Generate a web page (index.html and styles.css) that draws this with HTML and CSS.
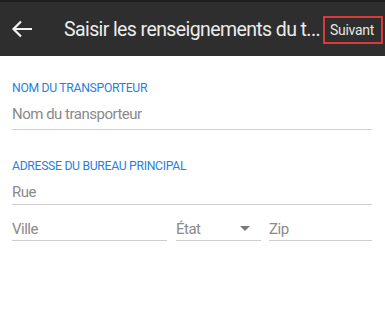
FILE: index.html
```
<!DOCTYPE html>
<html lang="fr">
<head>
<meta charset="utf-8">
<link rel="stylesheet" href="styles.css">
</head>
<body>
<header class="toolbar">
  <svg class="back" width="22" height="18" viewBox="0 0 22 18"><path d="M21 9H2.5M10 1.5L2.5 9l7.5 7.5" fill="none" stroke="#f2f2f2" stroke-width="2.2"/></svg>
  <h1 class="title">Saisir les renseignements du t...</h1>
  <button class="next">Suivant</button>
</header>
<main class="form">
  <section class="group">
    <div class="label">NOM DU TRANSPORTEUR</div>
    <div class="field name">Nom du transporteur</div>
  </section>
  <section class="group address">
    <div class="label">ADRESSE DU BUREAU PRINCIPAL</div>
    <div class="field street">Rue</div>
    <div class="row">
      <div class="field city">Ville</div>
      <div class="field state">État<span class="caret"></span></div>
      <div class="field zip">Zip</div>
    </div>
  </section>
</main>
</body>
</html>
```
FILE: styles.css
```
html, body { margin: 0; padding: 0; background: #fff; }
body { width: 385px; height: 311px; overflow: hidden; font-family: Roboto, "Noto Sans", sans-serif; }
.toolbar {
  height: 54px;
  background: #2e2e2e;
  border-top: 2px solid #1e1e1e;
  display: flex;
  align-items: center;
  box-sizing: content-box;
}
.back { margin-left: 11px; margin-right: 31px; flex: none; }
.title {
  margin: 0;
  font-weight: 400;
  font-size: 19.5px;
  color: #ececec;
  white-space: nowrap;
  letter-spacing: -0.6px;
  flex: none;
}
.next {
  margin-left: auto;
  margin-right: 2px;
  background: transparent;
  border: 2px solid #d93a3a;
  color: #e6e6e6;
  font-family: Roboto, sans-serif;
  font-size: 14px;
  letter-spacing: -0.3px;
  padding: 0 7px 0 5px;
  height: 28px;
  margin-top: 2px;
  line-height: 24px;
  white-space: nowrap;
  flex: none;
}
.form { padding: 0 13px 0 12px; }
.group { padding-top: 25px; }
.group.address { padding-top: 29px; }
.label { color: #1f82de; font-size: 12.2px; line-height: 14px; letter-spacing: -0.3px; }
.field {
  color: #8a8a8a;
  font-size: 15px;
  line-height: 20px;
  letter-spacing: -0.5px;
  border-bottom: 1px solid #cfcfcf;
  position: relative;
}
.name { padding: 9px 0 5px; }
.street { padding: 9px 0 2px; }
.row .field { padding: 14px 0 1px; }
.row { display: flex; gap: 8px; }
.city { width: 155px; }
.state { width: 85px; margin-left: 1px; }
.zip { flex: 1; }
.caret {
  position: absolute;
  right: 11px; top: 21px;
  border-left: 5.5px solid transparent;
  border-right: 5.5px solid transparent;
  border-top: 5.5px solid #7a7a7a;
}
```
